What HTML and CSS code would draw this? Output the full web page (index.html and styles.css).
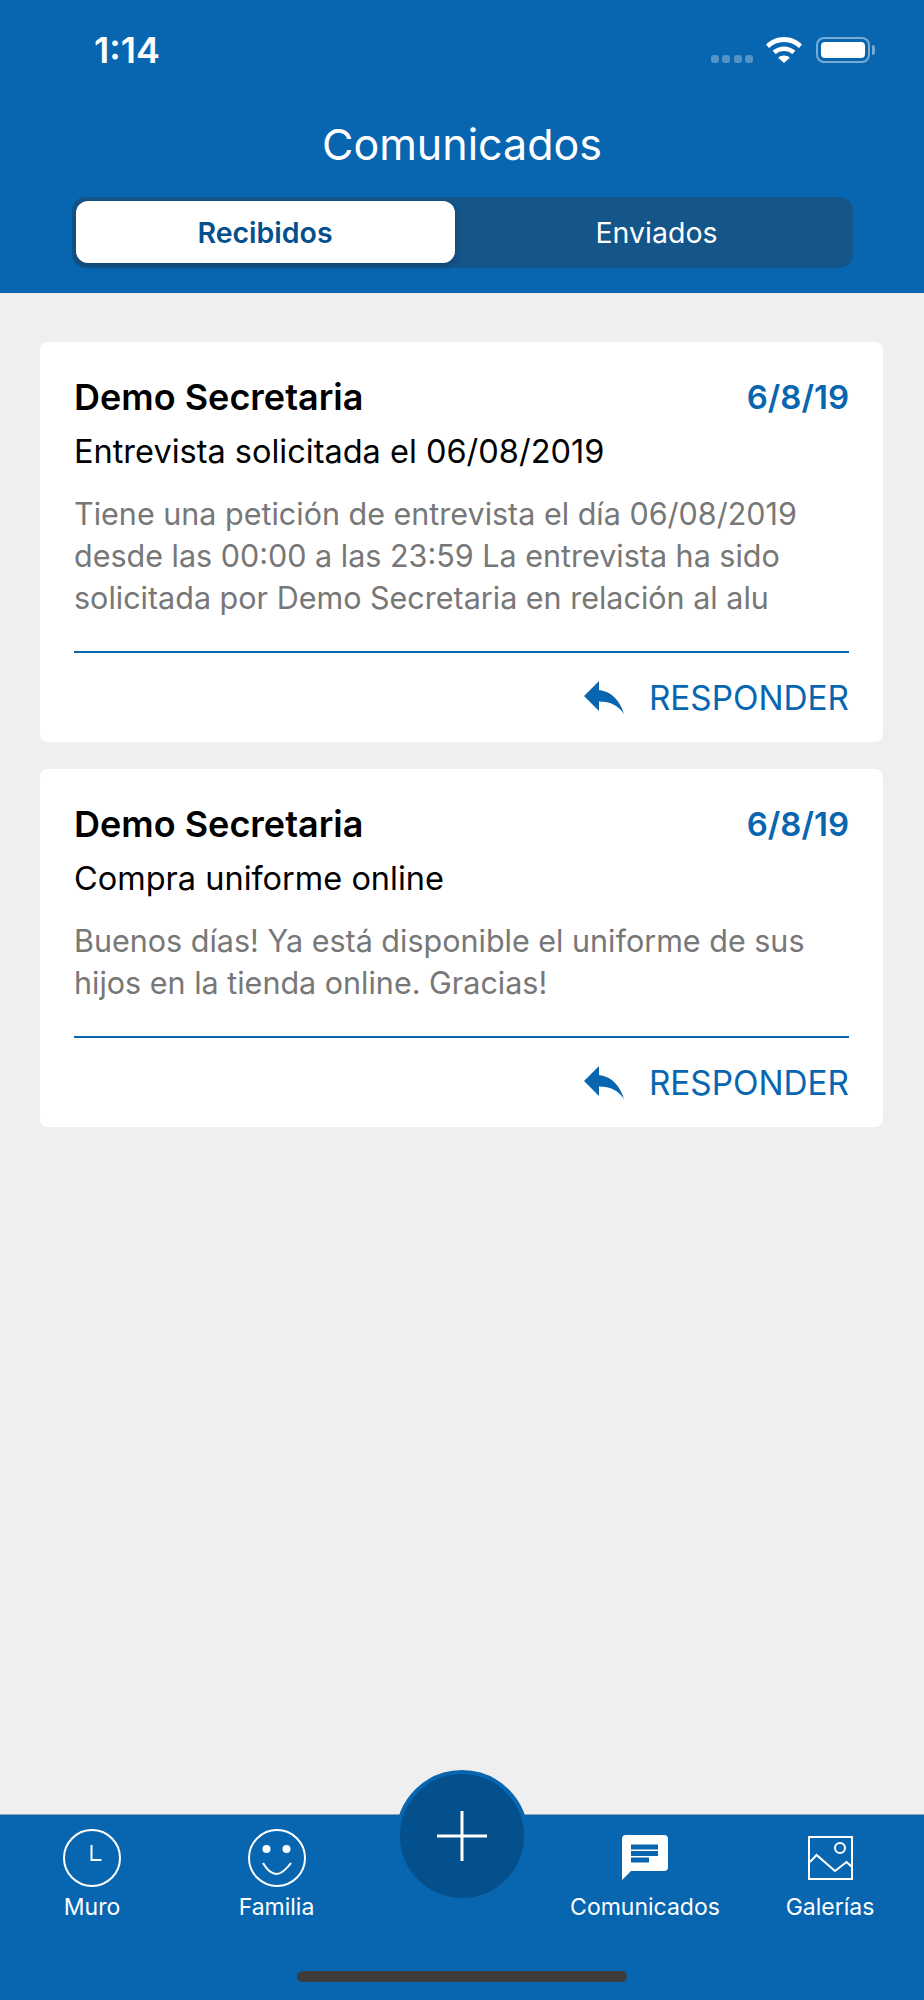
FILE: index.html
```html
<!doctype html>
<html>

	<head>

		<meta name="viewport" content="width=device-width, initial-scale=1.0">
		<title>Comunicados</title>

		<link rel="stylesheet" href="styles.css">

	</head>

	<body>

		<header class="topBar">

			<div class="statusBar">
				<span class="statusTime">1:14</span>
				<div class="statusIcons">
					<span class="signalDots"><i></i><i></i><i></i><i></i></span>
					<svg class="wifiIcon" width="36" height="26" viewBox="0 0 36 26">
						<path fill="#fff" d="M18 0C11 0 5 2.700 0 7.400L3 11C7 7.300 12.300 5 18 5s11 2.300 15 6l3-3.600C31 2.700 25 0 18 0z"/>
						<path fill="#fff" d="M18 9.500c-4.400 0-8.200 1.600-11.300 4.300l3 3.500c2.200-2 5.100-3.200 8.300-3.200s6.100 1.200 8.300 3.200l3-3.500C26.200 11.100 22.400 9.500 18 9.500z"/>
						<path fill="#fff" d="M18 18.500c-2.300 0-4.300.8-5.800 2.200L18 26l5.800-5.300c-1.500-1.400-3.500-2.200-5.800-2.200z"/>
					</svg>
					<span class="battery"><span class="batteryLevel"></span></span>
				</div>
			</div>

			<h1 class="pageTitle">Comunicados</h1>

			<div class="segmented">
				<button class="segment segmentActive">Recibidos</button>
				<button class="segment">Enviados</button>
			</div>

		</header>

		<main class="messageList">

			<article class="card">
				<div class="cardHead">
					<h2 class="sender">Demo Secretaria</h2>
					<span class="msgDate">6/8/19</span>
				</div>
				<p class="subject">Entrevista solicitada el 06/08/2019</p>
				<p class="preview">Tiene una petición de entrevista el día 06/08/2019 desde las 00:00 a las 23:59 La entrevista ha sido solicitada por Demo Secretaria en relación al alu</p>
				<div class="cardActions">
					<svg class="replyIcon" width="40" height="33" viewBox="0 0 40 33">
						<path fill="#0866b0" d="M0 15L15 0v9C28 10.500 36 20 40 33c-5-8-13.500-12.500-25-12.500V30z"/>
					</svg>
					<span class="replyLabel">RESPONDER</span>
				</div>
			</article>

			<article class="card">
				<div class="cardHead">
					<h2 class="sender">Demo Secretaria</h2>
					<span class="msgDate">6/8/19</span>
				</div>
				<p class="subject">Compra uniforme online</p>
				<p class="preview">Buenos días! Ya está disponible el uniforme de sus hijos en la tienda online. Gracias!</p>
				<div class="cardActions">
					<svg class="replyIcon" width="40" height="33" viewBox="0 0 40 33">
						<path fill="#0866b0" d="M0 15L15 0v9C28 10.500 36 20 40 33c-5-8-13.500-12.500-25-12.500V30z"/>
					</svg>
					<span class="replyLabel">RESPONDER</span>
				</div>
			</article>

		</main>

		<footer class="tabBar">

			<div class="tabItem">
				<span class="tabIcon">
					<svg width="58" height="58" viewBox="0 0 58 58" fill="none" stroke="#fff" stroke-width="2">
						<circle cx="29" cy="29" r="28"/>
						<path d="M28.500 16v15h10"/>
					</svg>
				</span>
				<span class="tabLabel">Muro</span>
			</div>

			<div class="tabItem">
				<span class="tabIcon">
					<svg width="58" height="58" viewBox="0 0 58 58" fill="none" stroke="#fff" stroke-width="2">
						<circle cx="29" cy="29" r="28"/>
						<circle cx="18.500" cy="20" r="4" fill="#fff" stroke="none"/>
						<circle cx="38.500" cy="20" r="4" fill="#fff" stroke="none"/>
						<path d="M15 34c3.500 6 8.500 11 13.500 11s10-5 14.500-11"/>
					</svg>
				</span>
				<span class="tabLabel">Familia</span>
			</div>

			<div class="tabItem"></div>

			<div class="tabItem">
				<span class="tabIcon">
					<svg width="46" height="46" viewBox="0 0 46 46">
						<path fill="#fff" d="M4 0h38a4 4 0 0 1 4 4v28a4 4 0 0 1-4 4H9L0 45V4a4 4 0 0 1 4-4z"/>
						<path fill="#0866b0" d="M9 9.500h27v5H9zM9 16h27v5H9zM9 22.500h18v5H9z"/>
					</svg>
				</span>
				<span class="tabLabel">Comunicados</span>
			</div>

			<div class="tabItem">
				<span class="tabIcon">
					<svg width="45" height="44" viewBox="0 0 45 44" fill="none" stroke="#fff" stroke-width="2">
						<rect x="1" y="1" width="43" height="42"/>
						<circle cx="32" cy="12" r="5"/>
						<path d="M2 26l6.500-7 18.500 16 11.500-9 5.500 5"/>
					</svg>
				</span>
				<span class="tabLabel">Galerías</span>
			</div>

			<button class="addButton">
				<svg width="50" height="50" viewBox="0 0 50 50" stroke="#fff" stroke-width="3">
					<path d="M25 0v50M0 25h50"/>
				</svg>
			</button>

			<div class="homeIndicator"></div>

		</footer>

	</body>

</html>
```
FILE: styles.css
```css
html, body {
	margin: 0; padding: 0;
	font-family: "Inter", "Liberation Sans", sans-serif;
	background-color: #efefef;
}

body {
	display: flex;
	flex-direction: column;
	height: 2000px;
	overflow: hidden;
}

.topBar {
	height: 293px;
	background-color: #0866b0;
	color: white;
}

.statusBar {
	display: flex;
	justify-content: space-between;
	align-items: center;
	height: 50px;
	padding: 25px 54px 0 94px;
}

.statusTime {
	font-size: 36px;
	font-weight: 600;
}

.statusIcons {
	display: flex;
	align-items: center;
}

.signalDots {
	display: flex;
	gap: 3.500px;
	margin: 18px 13px 0 0;
}

.signalDots i {
	width: 8px;
	height: 8px;
	border-radius: 3px;
	background-color: rgba(255, 255, 255, 0.3);
}

.wifiIcon {
	margin-right: 14px;
}

.battery {
	position: relative;
	box-sizing: border-box;
	display: block;
	width: 54px;
	height: 26px;
	padding: 3px;
	border: 2px solid rgba(255, 255, 255, 0.45);
	border-radius: 8px;
}

.battery::after {
	content: "";
	position: absolute;
	right: -7px;
	top: 6px;
	width: 3px;
	height: 10px;
	border-radius: 0 3px 3px 0;
	background-color: rgba(255, 255, 255, 0.45);
}

.batteryLevel {
	display: block;
	height: 100%;
	border-radius: 4px;
	background-color: white;
}

.pageTitle {
	margin: 44px 0 0;
	font-size: 43px;
	font-weight: 400;
	line-height: 50px;
	text-align: center;
}

.segmented {
	box-sizing: border-box;
	display: flex;
	width: 781px;
	height: 71px;
	margin: 28px auto 0;
	padding: 4px 0 5px 4px;
	border-radius: 14px;
	background-color: #14558a;
}

.segment {
	flex: 1;
	padding: 0 0 0 6px;
	border: none;
	border-radius: 12px;
	background: none;
	color: white;
	font-family: inherit;
	font-size: 28.500px;
	font-weight: 400;
}

.segmentActive {
	flex: 0 0 379px;
	padding: 0;
	background-color: white;
	color: #04508c;
	font-weight: 600;
	box-shadow: 0 2px 6px rgba(0, 0, 0, 0.25);
}

.messageList {
	flex: 1;
	display: flex;
	flex-direction: column;
	gap: 27px;
	padding: 49px 41px 0 40px;
}

.card {
	padding: 0 34px;
	border-radius: 8px;
	background-color: white;
}

.cardHead {
	display: flex;
	justify-content: space-between;
	align-items: center;
	padding: 35px 0 0;
}

.sender {
	margin: 0;
	font-size: 36px;
	font-weight: 600;
	line-height: 40px;
	color: black;
}

.msgDate {
	font-size: 33px;
	font-weight: 600;
	color: #0866b0;
}

.subject {
	margin: 15px 0 0;
	font-size: 32.500px;
	line-height: 40px;
	color: black;
}

.preview {
	margin: 21px 0 0;
	padding-bottom: 32px;
	font-size: 30.500px;
	line-height: 42px;
	color: #777;
	border-bottom: 2px solid #0866b0;
}

.cardActions {
	display: flex;
	justify-content: flex-end;
	align-items: center;
	gap: 25px;
	height: 89px;
}

.replyLabel {
	font-size: 33.300px;
	color: #0866b0;
}

.tabBar {
	position: relative;
	display: grid;
	grid-template-columns: 184px 185px 185px 182px 188px;
	align-items: start;
	box-sizing: border-box;
	height: 186px;
	padding-top: 14px;
	border-top: 1px solid #8fa3b5;
	background-color: #0866b0;
	color: white;
}

.tabItem {
	display: flex;
	flex-direction: column;
	align-items: center;
	gap: 6px;
}

.tabIcon {
	display: flex;
	align-items: center;
	justify-content: center;
	height: 58px;
}

.tabLabel {
	font-size: 23px;
	line-height: 28px;
}

.addButton {
	position: absolute;
	left: 396px;
	top: -45px;
	box-sizing: border-box;
	display: flex;
	align-items: center;
	justify-content: center;
	width: 132px;
	height: 132px;
	padding: 0;
	border: 4px solid #0866b0;
	border-radius: 50%;
	background-color: #04508c;
}

.homeIndicator {
	position: absolute;
	left: 297px;
	bottom: 18px;
	width: 330px;
	height: 11px;
	border-radius: 6px;
	background-color: #3c3c3c;
}
```
